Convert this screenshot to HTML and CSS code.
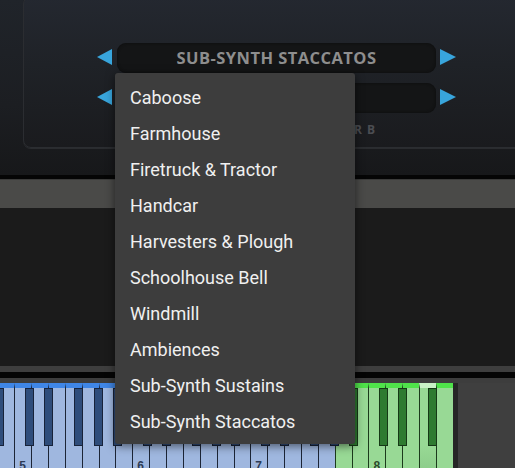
FILE: index.html
```html
<!DOCTYPE html>
<html>
<head>
<meta charset="utf-8">
<link rel="stylesheet" href="styles.css">
</head>
<body>
<div class="app">
  <header class="top">
    <div class="panel">
      <div class="sel-row">
        <span class="arrow left"></span>
        <div class="display">SUB-SYNTH STACCATOS</div>
        <span class="arrow right"></span>
      </div>
      <div class="sel-row">
        <span class="arrow left"></span>
        <div class="display"></div>
        <span class="arrow right"></span>
      </div>
      <div class="panel-label">SAMPLE LAYER B</div>
    </div>
  </header>
  <div class="rule-black"></div>
  <div class="toolbar"></div>
  <div class="content"></div>
  <div class="rule-gray"></div>
  <div class="rule-black"></div>
  <div class="rule-gray2"></div>
  <div class="keyboard-wrap">
    <div class="keyboard">
      <div class="oct">
        <div class="w"></div><div class="w"></div><div class="w"></div><div class="w"></div><div class="w"></div><div class="w"></div><div class="w"></div>
        <div class="b cs"></div><div class="b ds"></div><div class="b fs"></div><div class="b gs"></div><div class="b as"></div>
      </div>
      <div class="oct">
        <div class="w"><span class="num">5</span></div><div class="w"></div><div class="w"></div><div class="w"></div><div class="w"></div><div class="w"></div><div class="w"></div>
        <div class="b cs"></div><div class="b ds"></div><div class="b fs"></div><div class="b gs"></div><div class="b as"></div>
      </div>
      <div class="oct">
        <div class="w"><span class="num">6</span></div><div class="w"></div><div class="w"></div><div class="w"></div><div class="w"></div><div class="w"></div><div class="w"></div>
        <div class="b cs"></div><div class="b ds"></div><div class="b fs"></div><div class="b gs"></div><div class="b as"></div>
      </div>
      <div class="oct">
        <div class="w"><span class="num">7</span></div><div class="w"></div><div class="w"></div><div class="w"></div><div class="w"></div><div class="w g"></div><div class="w g"></div>
        <div class="b cs"></div><div class="b ds"></div><div class="b fs"></div><div class="b gs"></div><div class="b as g"></div>
      </div>
      <div class="oct last">
        <div class="w g"><span class="num">8</span></div><div class="w g"></div><div class="w g"></div><div class="w g hl"></div><div class="w g"></div>
        <div class="b cs g"></div><div class="b ds g"></div><div class="b fs g"></div>
      </div>
    </div>
  </div>

  <ul class="menu">
    <li>Caboose</li>
    <li>Farmhouse</li>
    <li>Firetruck &amp; Tractor</li>
    <li>Handcar</li>
    <li>Harvesters &amp; Plough</li>
    <li>Schoolhouse Bell</li>
    <li>Windmill</li>
    <li>Ambiences</li>
    <li>Sub-Synth Sustains</li>
    <li>Sub-Synth Staccatos</li>
  </ul>
</div>
</body>
</html>
```

FILE: styles.css
```css
html, body {
  margin: 0;
  padding: 0;
  background: #1b1b1b;
}
.app {
  position: relative;
  width: 515px;
  height: 468px;
  overflow: hidden;
  font-family: "Open Sans", "Liberation Sans", sans-serif;
}
.top {
  height: 175px;
  padding-left: 23px;
  box-sizing: border-box;
  background: linear-gradient(180deg, #20242a 0%, #1c1e22 60%, #17181a 100%);
  overflow: hidden;
}
.panel {
  margin-top: -4px;
  width: 520px;
  height: 152px;
  box-sizing: border-box;
  border: 1px solid #2b2d31;
  border-radius: 8px;
  padding: 46px 0 0 73px;
  background: linear-gradient(180deg, #242830 0%, #1f2227 45%, #1a1b1e 100%);
  box-shadow: 0 1px 0 #2a2c2f;
}
.sel-row {
  display: flex;
  align-items: center;
  height: 30px;
}
.sel-row + .sel-row {
  margin-top: 10px;
}
.arrow {
  width: 0;
  height: 0;
  border-top: 8px solid transparent;
  border-bottom: 8px solid transparent;
  margin-top: -2px;
}
.arrow.left {
  border-right: 15px solid #38a5dc;
  margin-right: 5px;
}
.arrow.right {
  border-left: 16px solid #38a5dc;
  margin-left: 4px;
}
.display {
  width: 319px;
  height: 30px;
  border-radius: 9px;
  background: #141516;
  box-shadow: inset 0 0 3px #0c0c0c;
  color: #8e8e8e;
  font-weight: 700;
  font-size: 16.5px;
  letter-spacing: 0.45px;
  line-height: 30px;
  text-align: center;
}
.panel-label {
  width: 352px;
  margin-top: 10px;
  margin-left: -73px;
  text-align: right;
  font-size: 12px;
  font-weight: 700;
  letter-spacing: 1px;
  line-height: 14px;
  color: #4b4d52;
}
.rule-black {
  height: 4px;
  background: #050505;
}
.toolbar {
  height: 28px;
  background: #4a4a48;
  border-top: 1px solid #3b3b3a;
}
.content {
  height: 158px;
  background: #1b1b1b;
}
.rule-gray {
  height: 6px;
  background: #3e3e3e;
}
.content + .rule-gray + .rule-black {
  height: 6px;
}
.rule-gray2 {
  height: 5px;
  background: #3d3d3d;
}
.keyboard-wrap {
  height: 90px;
  background: #3f3f3f;
  overflow: hidden;
}
.keyboard {
  display: flex;
  margin-left: -103.7px;
}
.oct {
  position: relative;
  display: flex;
  flex: none;
}
.oct.last {
  border-right: 5px solid #262626;
}
.w {
  position: relative;
  width: 16.86px;
  height: 100px;
  flex: none;
  box-sizing: border-box;
  border-left: 1px solid #1c2536;
  border-top: 5px solid #3f86e6;
  background: #9fb7df;
}
.w.g {
  border-left-color: #1c3a1c;
  border-top-color: #4fe34a;
  background: #98d995;
}
.w.hl {
  border-top-color: #c9f2c6;
  background: linear-gradient(180deg, #98d995 0%, #98d995 60%, #86c784 100%);
}
.b {
  position: absolute;
  top: 5px;
  width: 9px;
  height: 58px;
  box-sizing: border-box;
  border: 1px solid #18233a;
  background: #2f4d7b;
}
.b.g {
  border-color: #163816;
  background: #2e7a30;
}
.cs { left: 11px; }
.ds { left: 30px; }
.fs { left: 60px; }
.gs { left: 80px; }
.as { left: 99px; }
.num {
  position: absolute;
  left: 4px;
  top: 72px;
  font-family: "Liberation Sans", sans-serif;
  font-weight: 700;
  font-size: 12px;
  line-height: 12px;
  color: #2c3a55;
}
.w.g .num {
  color: #2c4a2c;
}
.menu {
  position: absolute;
  left: 115px;
  top: 73px;
  width: 240px;
  height: 371px;
  box-sizing: border-box;
  margin: 0;
  padding: 7px 0 4px 0;
  list-style: none;
  background: #3d3d3d;
  border-radius: 3px;
  box-shadow: 0 2px 10px rgba(0, 0, 0, 0.55);
}
.menu li {
  padding-left: 15px;
  height: 36px;
  line-height: 36px;
  font-family: Roboto, "Noto Sans", sans-serif;
  font-size: 18px;
  color: #f0f0f0;
  white-space: nowrap;
}
```
